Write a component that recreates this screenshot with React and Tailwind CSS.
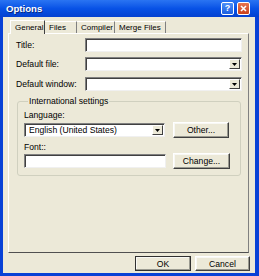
import React from "react";

const font = "font-['Liberation_Sans','Arial',sans-serif]";

function Btn({ children, className = "", def = false }) {
  return (
    <div
      className={`flex items-center justify-center bg-[#ECE9D8] text-black border ${
        def ? "border-[#303030]" : "border-t-white border-l-white border-b-[#404040] border-r-[#404040]"
      } shadow-[inset_-1px_-1px_0_#9a9a90,inset_1px_1px_0_#f8f8f4] ${className}`}
    >
      {children}
    </div>
  );
}

function Field({ className = "", children }) {
  return (
    <div
      className={`flex items-center bg-white border border-t-[#808080] border-l-[#808080] border-b-[#f0f0f0] border-r-[#f0f0f0] shadow-[inset_1px_1px_0_#404040] ${className}`}
    >
      {children}
    </div>
  );
}

function Select({ className = "", value = "" }) {
  return (
    <Field className={`justify-between ${className}`}>
      <span className="pl-[4px] leading-[10px] text-black">{value}</span>
      <div className="mr-[1px] w-[11px] h-[10px] flex items-center justify-center bg-[#ECE9D8] border border-t-white border-l-white border-b-[#404040] border-r-[#404040]">
        <svg width="5" height="3" viewBox="0 0 5 3">
          <path d="M0 0h5L2.5 3z" fill="#000" />
        </svg>
      </div>
    </Field>
  );
}

export default function App() {
  return (
    <div className={`w-[259px] h-[276px] bg-[#0841D6] flex flex-col ${font} text-[8.6px] leading-[10px] text-black`}>
      {/* title bar */}
      <div className="h-[17px] flex items-center justify-between bg-gradient-to-b from-[#2A74F2] via-[#0852E6] to-[#0441D0] pl-[6px] pr-[9px]">
        <span className="text-white font-bold text-[9.6px] leading-[12px] [text-shadow:1px_1px_0_#0a2a80]">Options</span>
        <div className="flex gap-[3px]">
          <div className="w-[13px] h-[13px] rounded-[2px] border border-white bg-gradient-to-b from-[#4C8EF8] to-[#1D5FE0] flex items-center justify-center text-white font-bold text-[9px] leading-[9px]">
            ?
          </div>
          <div className="w-[13px] h-[13px] rounded-[2px] border border-white bg-gradient-to-b from-[#E8754F] to-[#C83E1A] flex items-center justify-center">
            <svg width="7" height="7" viewBox="0 0 7 7">
              <path d="M1 1L6 6M6 1L1 6" stroke="#fff" strokeWidth="1.6" />
            </svg>
          </div>
        </div>
      </div>

      {/* body */}
      <div className="flex-1 ml-[3px] mr-[4px] mb-[3px] bg-[#ECE9D8] flex flex-col">
        {/* tabs */}
        <div className="flex items-end pt-[2px] pl-[7px] h-[16px] text-[8px]">
          <div className="w-[35px] h-[14px] pl-[4px] flex items-center border-t border-l border-white border-r border-r-[#404040] bg-[#ECE9D8] relative z-10 -mb-[1px]">
            General
          </div>
          <div className="w-[32px] h-[12px] pl-[4px] flex items-center border-r border-[#808080] border-t border-t-white">Files</div>
          <div className="w-[38px] h-[12px] pl-[4px] flex items-center border-r border-[#808080] border-t border-t-white">Compiler</div>
          <div className="w-[51px] h-[12px] pl-[4px] flex items-center border-r border-[#808080] border-t border-t-white">Merge Files</div>
        </div>

        {/* panel */}
        <div className="ml-[5px] mr-[6px] h-[220px] border border-t-white border-l-white border-r-[#808080] border-b-[#505050] flex flex-col pt-[4px] pl-[7px] pr-[6px]">
          <div className="flex items-center h-[14px]">
            <span className="w-[69px]">Title:</span>
            <Field className="flex-1 h-[14px]" />
          </div>
          <div className="flex items-center h-[14px] mt-[5px]">
            <span className="w-[69px]">Default file:</span>
            <Select className="flex-1 h-[14px]" />
          </div>
          <div className="flex items-center h-[14px] mt-[6px]">
            <span className="w-[69px]">Default window:</span>
            <Select className="flex-1 h-[14px]" />
          </div>

          <fieldset className="mt-[5px] ml-[1px] mr-[2px] border border-[#D0D0BF] rounded-[3px] pl-[6px] pr-[10px] pb-[6px]">
            <legend className="ml-[4px] px-[1px] leading-[10px]">International settings</legend>
            <div className="pt-[4px]">Language:</div>
            <div className="flex items-center mt-[2px]">
              <Select className="w-[141px] h-[14px]" value="English (United States)" />
              <Btn className="ml-[8px] w-[56px] h-[16px]">Other...</Btn>
            </div>
            <div className="mt-[4px]">Font::</div>
            <div className="flex items-center mt-[1px]">
              <Field className="w-[142px] h-[14px]" />
              <Btn className="ml-[7px] w-[57px] h-[16px]">Change...</Btn>
            </div>
          </fieldset>
        </div>

        {/* bottom buttons */}
        <div className="flex justify-end pt-[3px] pr-[5px] gap-[4px]">
          <Btn def className="w-[56px] h-[15px]">OK</Btn>
          <Btn className="w-[55px] h-[15px]">Cancel</Btn>
        </div>
      </div>
    </div>
  );
}
